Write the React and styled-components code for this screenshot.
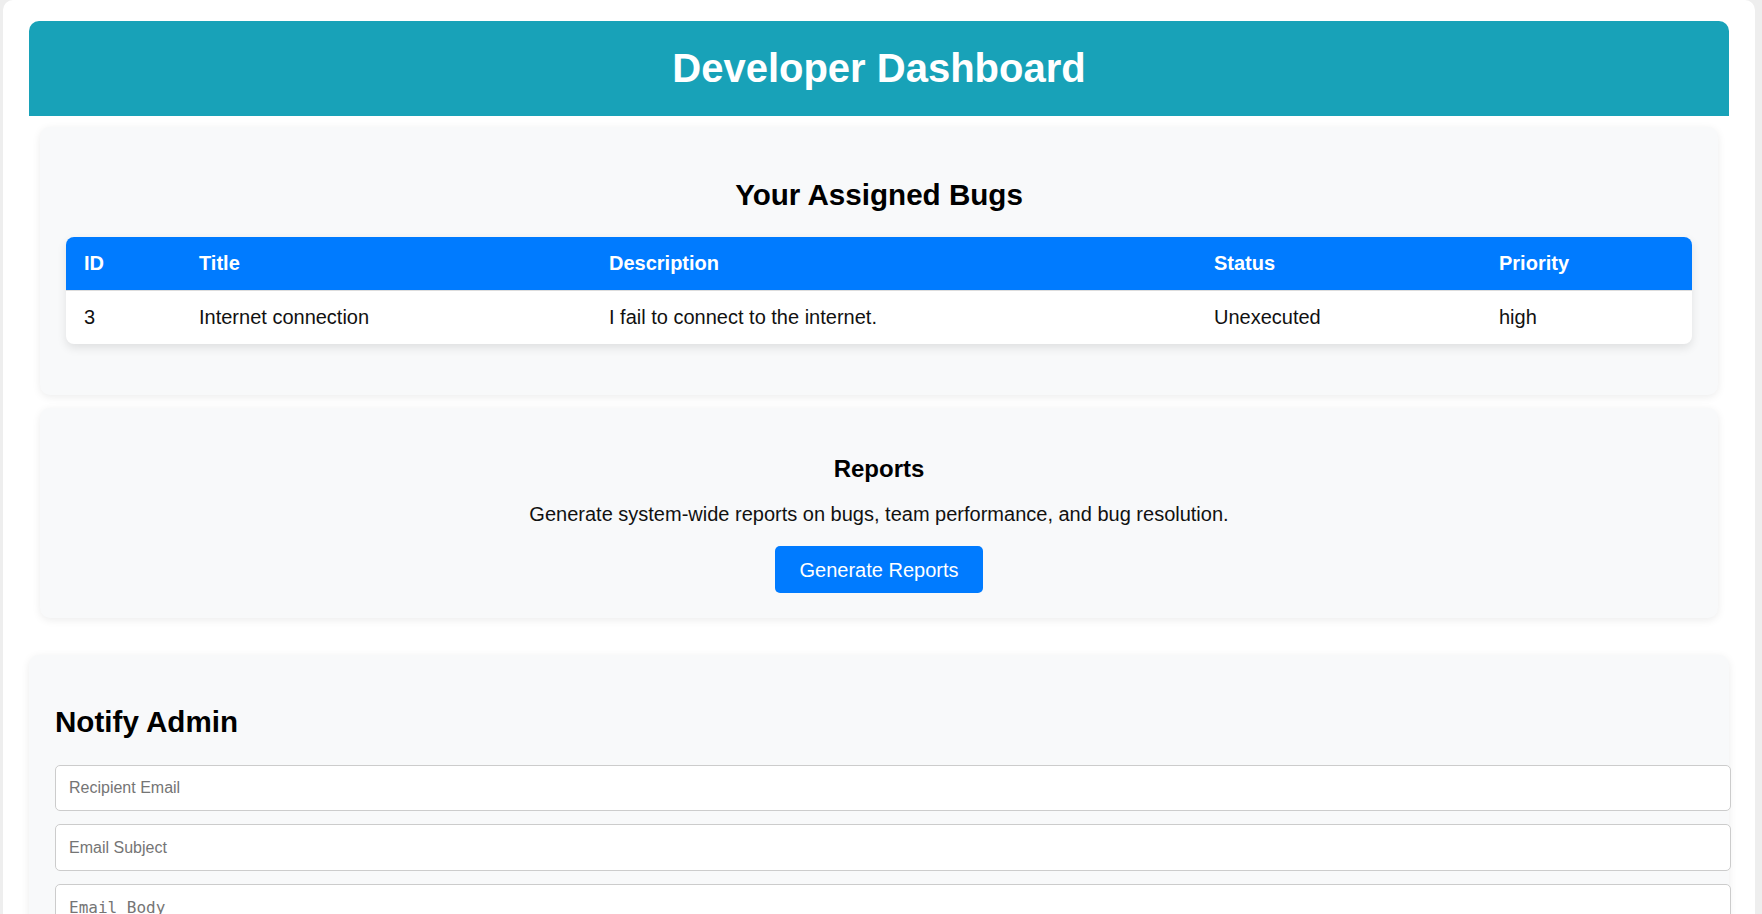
import React from "react";
import styled, { createGlobalStyle } from "styled-components";

const GlobalStyle = createGlobalStyle`
  html, body {
    margin: 0;
    padding: 0;
    background: #eeeeee;
  }
  body {
    font-family: "Liberation Sans", Arial, sans-serif;
    color: #111;
  }
  * { box-sizing: border-box; }
`;

const Page = styled.div`
  margin: 0 0 0 3px;
  width: 1752px;
  min-height: 914px;
  background: #ffffff;
  border-radius: 10px 10px 0 0;
  padding: 21px 26px 40px;
`;

const Header = styled.header`
  background: #18a2b8;
  border-radius: 10px 10px 0 0;
  padding: 24px 0;
`;

const HeaderTitle = styled.h1`
  margin: 0;
  font-size: 40px;
  line-height: 47px;
  font-weight: 700;
  color: #ffffff;
  text-align: center;
`;

const Card = styled.section`
  background: #f8f9fa;
  border-radius: 10px;
  box-shadow: 0 2px 8px rgba(0, 0, 0, 0.08);
  padding: 25px 26px;
  margin: ${(p) => p.$margin};
  text-align: ${(p) => (p.$center ? "center" : "left")};
`;

const SectionTitle = styled.h2`
  margin: ${(p) => p.$space};
  font-size: 29.6px;
  line-height: 34px;
  font-weight: 700;
  color: #000;
  text-align: ${(p) => (p.$center ? "center" : "left")};
`;

const BugTable = styled.table`
  width: 100%;
  table-layout: fixed;
  border-collapse: separate;
  border-spacing: 0;
  background: #ffffff;
  border-radius: 8px;
  overflow: hidden;
  box-shadow: 0 4px 10px rgba(0, 0, 0, 0.1);
  margin-bottom: 26px;
  font-size: 20px;
`;

const HeadCell = styled.th`
  background: #007bff;
  color: #ffffff;
  font-weight: 700;
  text-align: left;
  padding: 15px 18px;
  line-height: 23px;
  border-bottom: 1px solid #dddddd;
`;

const Cell = styled.td`
  padding: 15px 18px;
  line-height: 23px;
  color: #111;
  text-align: left;
`;

const ReportsTitle = styled.h3`
  margin: 22px 0 0;
  font-size: 24px;
  line-height: 28px;
  font-weight: 700;
  color: #000;
`;

const ReportsText = styled.p`
  margin: 20px 0 0;
  font-size: 20px;
  line-height: 23px;
  color: #111;
`;

const PrimaryButton = styled.button`
  margin-top: 20px;
  background: #007bff;
  color: #ffffff;
  border: none;
  border-radius: 5px;
  padding: 12.5px 25px;
  font-family: "Liberation Sans", Arial, sans-serif;
  font-size: 20px;
  line-height: 22px;
  cursor: pointer;
`;

const NotifyForm = styled.form`
  display: flex;
  flex-direction: column;
  gap: 13px;
  margin-top: 26px;
`;

const TextInput = styled.input`
  box-sizing: content-box;
  width: 100%;
  padding: 13px;
  border: 1px solid #cccccc;
  border-radius: 5px;
  background: #ffffff;
  font-family: "Liberation Sans", Arial, sans-serif;
  font-size: 16px;
  line-height: 18.4px;
  height: 18.4px;
  &::placeholder { color: #757575; }
`;

const BodyArea = styled.textarea`
  box-sizing: content-box;
  width: 100%;
  height: 120px;
  padding: 13px;
  border: 1px solid #cccccc;
  border-radius: 5px;
  background: #ffffff;
  font-family: monospace;
  font-size: 16px;
  resize: vertical;
  &::placeholder { color: #757575; }
`;

const columns = [
  { key: "id", label: "ID", width: 115 },
  { key: "title", label: "Title", width: 410 },
  { key: "description", label: "Description", width: 605 },
  { key: "status", label: "Status", width: 285 },
  { key: "priority", label: "Priority", width: 211 },
];

const bugs = [
  {
    id: 3,
    title: "Internet connection",
    description: "I fail to connect to the internet.",
    status: "Unexecuted",
    priority: "high",
  },
];

export default function App() {
  return (
    <>
      <GlobalStyle />
      <Page>
        <Header>
          <HeaderTitle>Developer Dashboard</HeaderTitle>
        </Header>

        <Card $margin="11px 11px 0">
          <SectionTitle $center $space="26px 0 25px">Your Assigned Bugs</SectionTitle>
          <BugTable>
            <colgroup>
              {columns.map((c) => (
                <col key={c.key} style={{ width: c.width }} />
              ))}
            </colgroup>
            <thead>
              <tr>
                {columns.map((c) => (
                  <HeadCell key={c.key}>{c.label}</HeadCell>
                ))}
              </tr>
            </thead>
            <tbody>
              {bugs.map((b) => (
                <tr key={b.id}>
                  {columns.map((c) => (
                    <Cell key={c.key}>{b[c.key]}</Cell>
                  ))}
                </tr>
              ))}
            </tbody>
          </BugTable>
        </Card>

        <Card $margin="13px 11px 0" $center>
          <ReportsTitle>Reports</ReportsTitle>
          <ReportsText>
            Generate system-wide reports on bugs, team performance, and bug resolution.
          </ReportsText>
          <PrimaryButton type="button">Generate Reports</PrimaryButton>
        </Card>

        <Card $margin="37px 0 0">
          <SectionTitle $space="25px 0 0">Notify Admin</SectionTitle>
          <NotifyForm onSubmit={(e) => e.preventDefault()}>
            <TextInput type="email" placeholder="Recipient Email" />
            <TextInput type="text" placeholder="Email Subject" />
            <BodyArea placeholder="Email Body" />
          </NotifyForm>
        </Card>
      </Page>
    </>
  );
}
